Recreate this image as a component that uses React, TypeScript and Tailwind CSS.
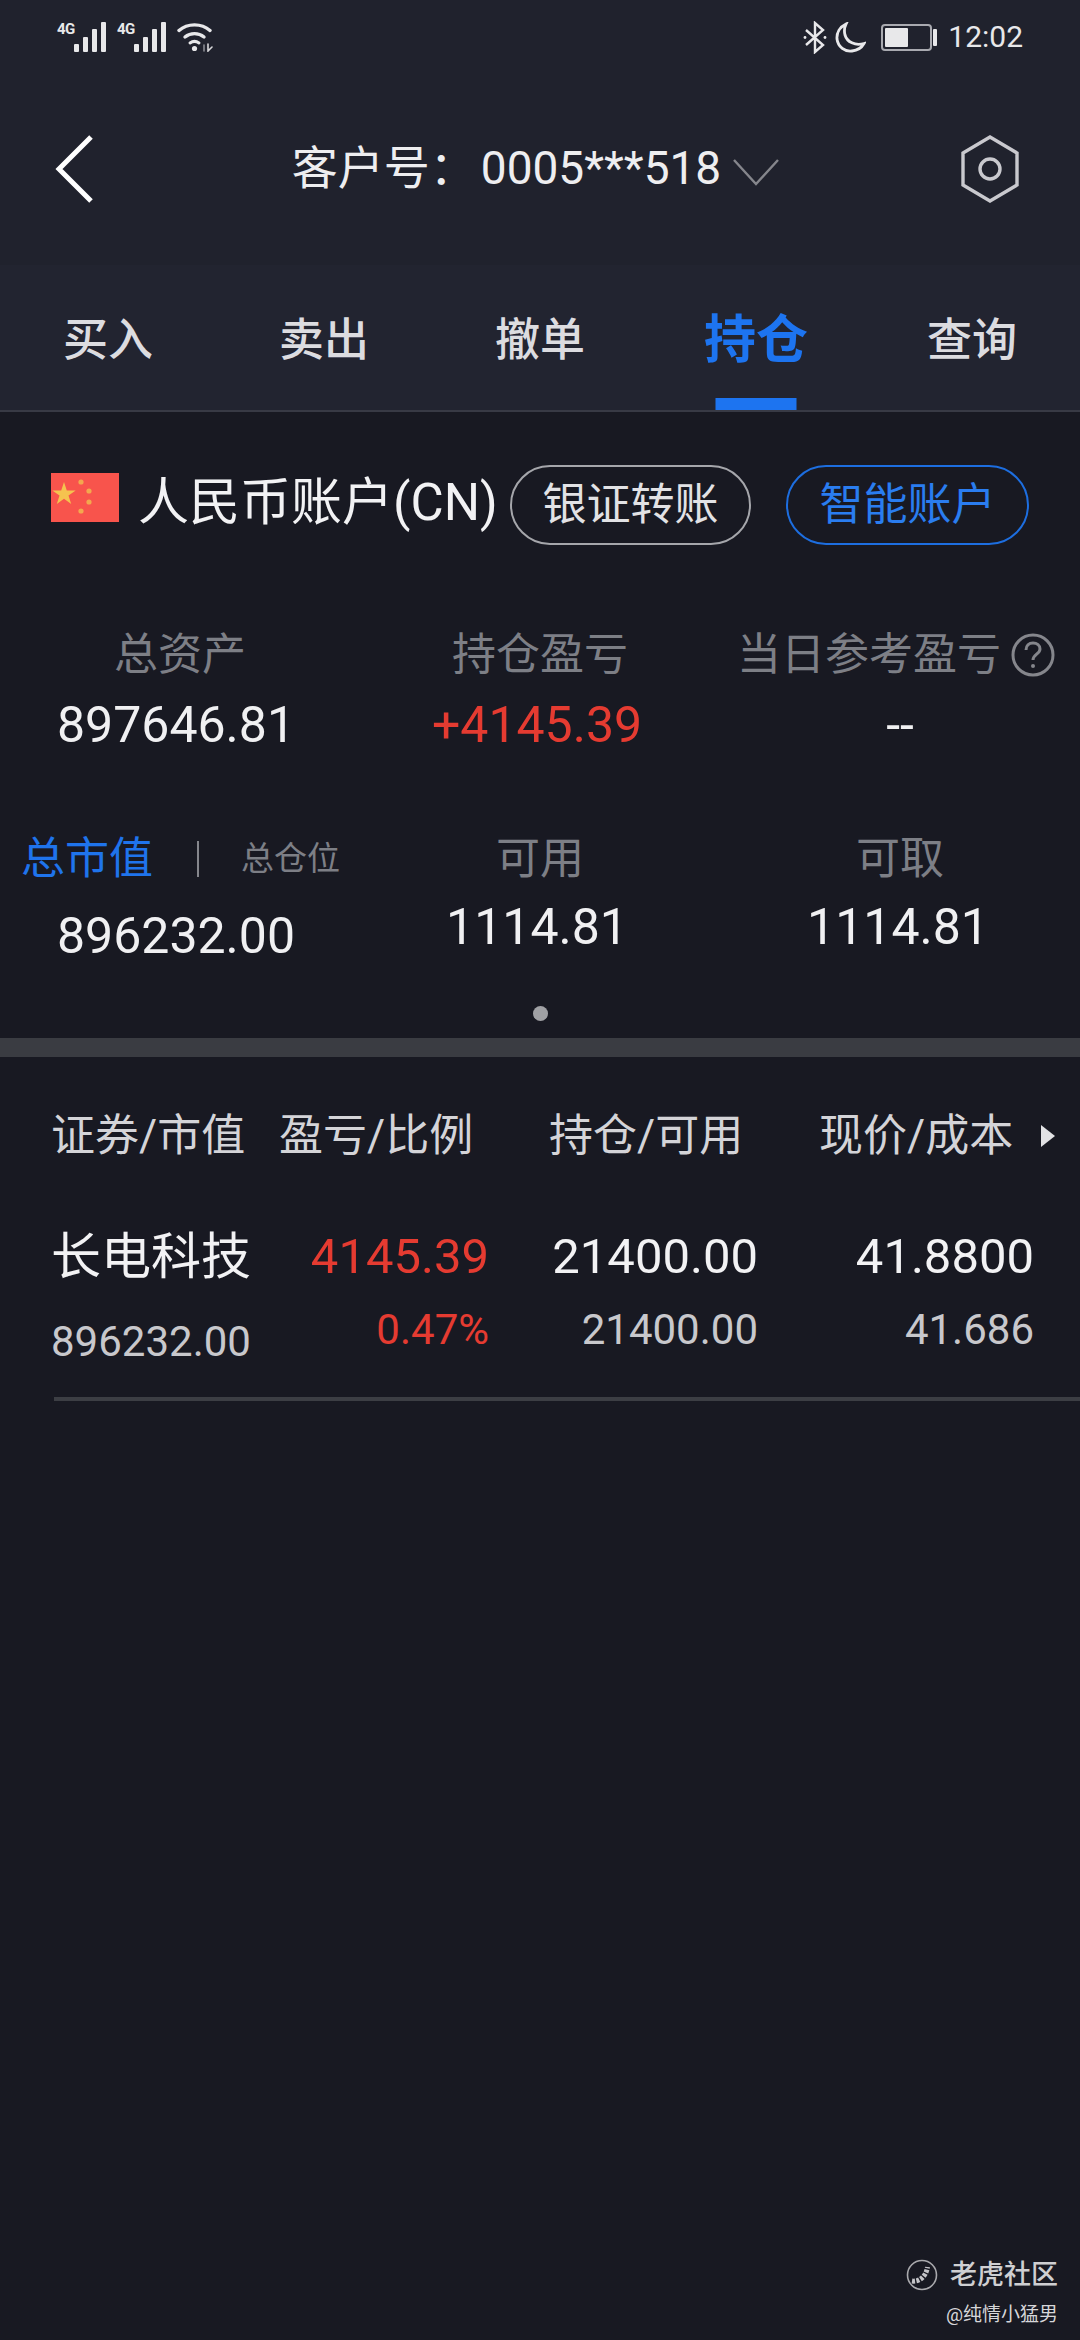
const font = { fontFamily: '"Roboto", "Noto Sans CJK SC", sans-serif' }

function Bars() {
  return (
    <svg width="33" height="30" viewBox="0 0 33 30" fill="#e8e8ea">
      <rect x="0" y="22" width="5" height="8" rx="1" />
      <rect x="9" y="15" width="5" height="15" rx="1" />
      <rect x="18" y="7" width="5" height="23" rx="1" />
      <rect x="27" y="0" width="5" height="30" rx="1" />
    </svg>
  )
}

function Signal({ className }: { className?: string }) {
  return (
    <div className={`flex items-start ${className ?? ""}`}>
      <span className="text-[15px] leading-[13px] font-bold text-[#e8e8ea] mt-[1px] w-[17px] tracking-[-0.5px]">4G</span>
      <Bars />
    </div>
  )
}

function Wifi() {
  return (
    <svg width="37" height="30" viewBox="0 0 37 30" fill="none" stroke="#e8e8ea" strokeWidth="3.4" strokeLinecap="round">
      <path d="M2 8.5C10.5 1 24.5 1 33 8.5" />
      <path d="M8 15C13.5 10.5 21.5 10.5 27 15" />
      <path d="M13 21C15.8 19 19.2 19 22 21" strokeWidth="3" />
      <circle cx="17.5" cy="26.5" r="2.6" fill="#e8e8ea" stroke="none" />
      <path d="M27 23V29" stroke="#8a8b92" strokeWidth="1.6" />
      <path d="M31 22V29L35 25" stroke="#d8d8da" strokeWidth="1.6" />
    </svg>
  )
}

function StatusBar() {
  return (
    <div className="h-[70px] flex items-start justify-between pl-[57px] pr-[57px] pt-[22px]">
      <div className="flex items-start">
        <Signal />
        <Signal className="ml-[10px]" />
        <div className="ml-[10px]">
          <Wifi />
        </div>
      </div>
      <div className="flex items-center -mt-[2px] h-[34px]">
        <svg width="24" height="33" viewBox="0 0 24 33" fill="none" stroke="#e8e8ea" strokeWidth="2.4">
          <path d="M3 9L20 24L12 31V2L20 9L3 24" />
          <circle cx="2" cy="16.5" r="1.4" fill="#e8e8ea" stroke="none" />
          <circle cx="22" cy="16.5" r="1.4" fill="#e8e8ea" stroke="none" />
        </svg>
        <svg className="ml-[8px]" width="31" height="31" viewBox="0 0 31 31" fill="none" stroke="#e8e8ea" strokeWidth="2.8">
          <path d="M11 2C4.5 5 1.5 11 2 17C3 25 10 30 17 29C22 28.5 26.5 26 29 21.5C20 24 12 20 10 13C9 9 9.5 5 11 2Z" />
        </svg>
        <div className="ml-[15px] w-[51px] h-[27px] rounded-[4px] border-2 border-[#a9aab0] p-[2px]">
          <div className="w-[23px] h-full bg-[#e8e8ea] rounded-[1px]" />
        </div>
        <div className="ml-[1px] w-[4px] h-[17px] bg-[#e8e8ea] rounded-[1px]" />
        <span className="ml-[11px] text-[30px] leading-[34px] text-[#e8e8ea]">12:02</span>
      </div>
    </div>
  )
}

function NavBar() {
  return (
    <div className="h-[195px] flex items-start justify-between pl-[55px] pr-[60px] pt-[65px]">
      <svg width="39" height="68" viewBox="0 0 39 68" fill="none" stroke="#ffffff" strokeWidth="5">
        <path d="M36 2L4 34L36 66" />
      </svg>
      <div className="flex items-center h-[66px] text-[46px] text-[#eeeef0] -mr-[17px]">
        <span>客户号：</span>
        <span className="ml-[5px]">0005***518</span>
        <svg className="ml-[12px] mt-[8px]" width="46" height="28" viewBox="0 0 46 28" fill="none" stroke="#85868c" strokeWidth="2.4">
          <path d="M1 2L23 26L45 2" />
        </svg>
      </div>
      <svg width="60" height="68" viewBox="0 0 60 68" fill="none" stroke="#c9c9ce" strokeWidth="3.4">
        <path d="M30 2L57 18V50L30 66L3 50V18Z" />
        <circle cx="30" cy="34" r="10" />
      </svg>
    </div>
  )
}

function Tabs() {
  const tabs = ["买入", "卖出", "撤单", "持仓", "查询"]
  return (
    <div className="h-[147px] grid grid-cols-5 bg-[#222430] border-b-2 border-[#383a45]">
      {tabs.map((t) =>
        t === "持仓" ? (
          <div key={t} className="relative flex justify-center pt-[38px]">
            <span className="text-[52px] leading-[76px] font-bold text-[#1d74f0]">{t}</span>
            <div className="absolute bottom-0 left-1/2 -translate-x-1/2 w-[81px] h-[12px] bg-[#1d74f0]" />
          </div>
        ) : (
          <div key={t} className="flex justify-center pt-[38px]">
            <span className="text-[45px] leading-[76px] font-medium text-[#dcdce0]">{t}</span>
          </div>
        ),
      )}
    </div>
  )
}

function AccountRow() {
  return (
    <div className="flex items-start pl-[51px] pt-[50px] h-[190px]">
      <svg className="mt-[11px]" width="68" height="49" viewBox="0 0 68 49">
        <rect width="68" height="49" fill="#f8544c" />
        <polygon
          points="13,9 15.8,17.4 24.7,17.4 17.5,22.6 20.2,31 13,25.8 5.8,31 8.5,22.6 1.3,17.4 10.2,17.4"
          fill="#f5c34f"
        />
        <circle cx="30" cy="9" r="2.6" fill="#f3a84e" />
        <circle cx="38" cy="18" r="2.6" fill="#f3a84e" />
        <circle cx="38" cy="29" r="2.6" fill="#f3a84e" />
        <circle cx="30" cy="38" r="2.6" fill="#f3a84e" />
      </svg>
      <span className="ml-[19px] mt-[6px] text-[51px] leading-[70px] text-[#f2f2f4] w-[372px] whitespace-nowrap">人民币账户(CN)</span>
      <div className="w-[241px] h-[80px] mt-[3px] rounded-full border-2 border-[#a5a6ab] flex items-center justify-center text-[44px] text-[#e2e2e5]">
        银证转账
      </div>
      <div className="ml-[35px] w-[243px] h-[80px] mt-[3px] rounded-full border-2 border-[#1d6ee0] flex items-center justify-center text-[44px] text-[#2a7df0]">
        智能账户
      </div>
    </div>
  )
}

function Stats() {
  return (
    <div>
      <div className="grid grid-cols-3 pt-[23px]">
        <div className="flex flex-col items-center">
          <span className="text-[44px] leading-[60px] text-[#7d7f86]">总资产</span>
          <span className="mt-[10px] text-[50px] leading-[60px] text-[#f0f0f2] -ml-[8px]">897646.81</span>
        </div>
        <div className="flex flex-col items-center">
          <span className="text-[44px] leading-[60px] text-[#7d7f86]">持仓盈亏</span>
          <span className="mt-[10px] text-[50px] leading-[60px] text-[#e53b31] -ml-[6px]">+4145.39</span>
        </div>
        <div className="flex flex-col items-center">
          <div className="flex items-center h-[60px] -ml-[8px]">
            <span className="text-[44px] leading-[60px] text-[#7d7f86] whitespace-nowrap">当日参考盈亏</span>
            <svg className="ml-[10px]" width="44" height="44" viewBox="0 0 44 44" fill="none" stroke="#85868c" strokeWidth="3">
              <circle cx="22" cy="22" r="20" />
              <path d="M15 17C15 12.5 18 10 22 10C26 10 29 12.5 29 16C29 21 22 21.5 22 27" />
              <circle cx="22" cy="33" r="2" fill="#85868c" stroke="none" />
            </svg>
          </div>
          <span className="mt-[10px] text-[50px] leading-[60px] text-[#f0f0f2]">--</span>
        </div>
      </div>
      <div className="grid grid-cols-3 pt-[74px]">
        <div className="flex flex-col">
          <div className="flex items-center h-[60px] pl-[21px]">
            <span className="text-[44px] leading-[60px] text-[#1f74ec]">总市值</span>
            <div className="ml-[44px] w-[2px] h-[36px] bg-[#85868c]" />
            <span className="ml-[42px] text-[33px] leading-[60px] text-[#7d7f86]">总仓位</span>
          </div>
          <span className="mt-[17px] pl-[57px] text-[50px] leading-[60px] text-[#f0f0f2]">896232.00</span>
        </div>
        <div className="flex flex-col items-center">
          <span className="text-[44px] leading-[60px] text-[#7d7f86]">可用</span>
          <span className="mt-[8px] text-[50px] leading-[60px] text-[#f0f0f2] -ml-[6px]">1114.81</span>
        </div>
        <div className="flex flex-col items-center">
          <span className="text-[44px] leading-[60px] text-[#7d7f86]">可取</span>
          <span className="mt-[8px] text-[50px] leading-[60px] text-[#f0f0f2] -ml-[4px]">1114.81</span>
        </div>
      </div>
      <div className="flex justify-center pt-[40px] pb-[17px]">
        <div className="w-[15px] h-[15px] rounded-full bg-[#a0a1a5]" />
      </div>
    </div>
  )
}

function Holdings() {
  return (
    <div>
      <div className="grid grid-cols-[228px_270px_270px_222px_1fr] pl-[51px] pt-[49px] text-[44px] leading-[60px] text-[#d4d4d8]">
        <span>证券/市值</span>
        <span>盈亏/比例</span>
        <span>持仓/可用</span>
        <span>现价/成本</span>
        <div className="flex items-center">
          <div className="w-0 h-0 border-y-[11px] border-y-transparent border-l-[14px] border-l-[#e2e2e5]" />
        </div>
      </div>
      <div className="grid grid-cols-[207px_231px_269px_276px] pl-[51px] pt-[61px]">
        <div className="flex flex-col">
          <span className="text-[50px] leading-[60px] text-[#f2f2f4] whitespace-nowrap">长电科技</span>
          <span className="mt-[25px] text-[42px] leading-[60px] text-[#c8c8cc]">896232.00</span>
        </div>
        <div className="flex flex-col items-end">
          <span className="text-[49px] leading-[60px] text-[#e53b31]">4145.39</span>
          <span className="mt-[13px] text-[42px] leading-[60px] text-[#e53b31]">0.47%</span>
        </div>
        <div className="flex flex-col items-end">
          <span className="text-[49px] leading-[60px] text-[#f2f2f4]">21400.00</span>
          <span className="mt-[13px] text-[42px] leading-[60px] text-[#c8c8cc]">21400.00</span>
        </div>
        <div className="flex flex-col items-end">
          <span className="text-[49px] leading-[60px] text-[#f2f2f4]">41.8800</span>
          <span className="mt-[13px] text-[42px] leading-[60px] text-[#c8c8cc]">41.686</span>
        </div>
      </div>
      <div className="ml-[54px] mt-[25px] h-[4px] bg-[#3c3e44]" />
    </div>
  )
}

function Watermark() {
  return (
    <div className="absolute right-[22px] bottom-[10px] flex flex-col items-end">
      <div className="flex items-center h-[40px]">
        <svg width="32" height="32" viewBox="0 0 32 32" fill="none" stroke="#a9a9ad" strokeWidth="1.6">
          <circle cx="16" cy="16" r="14.5" />
          <path d="M6 22C13 23 20 18 21.5 8" stroke="#c4c4c8" strokeWidth="5" strokeDasharray="3 1.4" />
        </svg>
        <span className="ml-[12px] text-[27px] leading-[40px] font-medium text-[#cfcfd2]">老虎社区</span>
      </div>
      <span className="mt-[5px] text-[19px] leading-[30px] text-[#d6d6d9]">@纯情小猛男</span>
    </div>
  )
}

export default function App() {
  return (
    <div className="relative w-[1080px] h-[2340px] bg-[#181922] overflow-hidden" style={font}>
      <div className="bg-[#20222d]">
        <StatusBar />
        <NavBar />
        <Tabs />
      </div>
      <AccountRow />
      <Stats />
      <div className="h-[19px] bg-[#3a3c42]" />
      <Holdings />
      <Watermark />
    </div>
  )
}
